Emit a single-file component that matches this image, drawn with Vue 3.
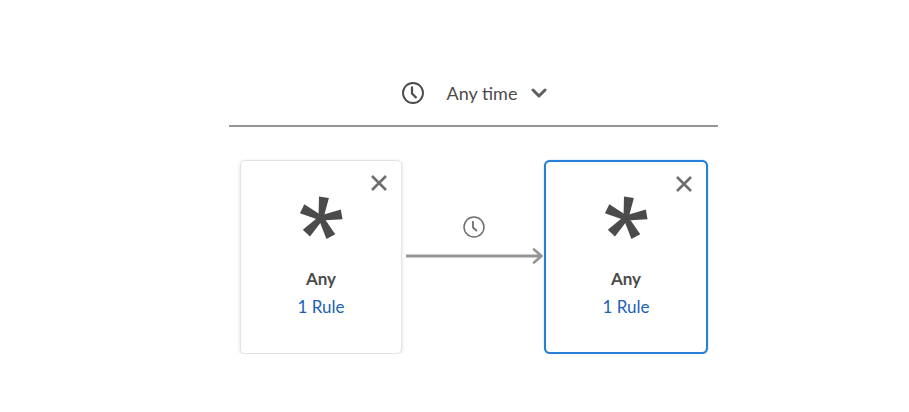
<script setup>
const cards = [
  { id: 1, selected: false },
  { id: 2, selected: true },
];
</script>

<template>
  <div class="page">
    <div class="time-select">
      <svg class="clock" width="24" height="24" viewBox="0 0 24 24">
        <circle cx="12" cy="12" r="10" fill="none" stroke="#4b4b4b" stroke-width="1.9" />
        <path d="M11 5.5 V12.5 L15.5 17" fill="none" stroke="#4b4b4b" stroke-width="2.2" />
      </svg>
      <span class="time-label">Any time</span>
      <svg class="chevron" width="16" height="10" viewBox="0 0 16 10">
        <path d="M2 2 L8 8 L14 2" fill="none" stroke="#5e5e5e" stroke-width="3" stroke-linecap="round" stroke-linejoin="round" />
      </svg>
    </div>

    <div class="flow">
      <template v-for="(card, i) in cards" :key="card.id">
        <div v-if="i > 0" class="connector">
          <svg class="small-clock" width="24" height="24" viewBox="0 0 24 24">
            <circle cx="12" cy="12" r="10" fill="none" stroke="#6e6e6e" stroke-width="1.5" />
            <path d="M11 6 V12.5 L15 16" fill="none" stroke="#6e6e6e" stroke-width="1.8" />
          </svg>
          <svg class="arrow" width="138" height="16" viewBox="0 0 138 16">
            <path d="M0 8 H135" stroke="#959595" stroke-width="3" />
            <path d="M128 1.5 L135.5 8 L128 14.5" fill="none" stroke="#959595" stroke-width="2.6" stroke-linecap="round" stroke-linejoin="round" />
          </svg>
        </div>
        <div class="card" :class="{ selected: card.selected }">
          <svg class="close" width="18" height="18" viewBox="0 0 18 18">
            <path d="M2 2 L16 16 M16 2 L2 16" stroke="#6e6e6e" stroke-width="2.6" />
          </svg>
          <svg class="star" width="50" height="50" viewBox="0 0 50 50">
            <g v-for="a in [8, 80, 152, 224, 296]" :key="a" :transform="`rotate(${a} 25 25)`">
              <path d="M22.5 25 L20 4 H30 L27.5 25 Z" fill="#4b4b4b" />
            </g>
          </svg>
          <div class="name">Any</div>
          <div class="rule">1 Rule</div>
        </div>
      </template>
    </div>
  </div>
</template>

<style scoped>
.page {
  width: 489px;
  margin-left: 229px;
  font-family: Lato, "Noto Sans", sans-serif;
  color: #4b4b4b;
}

.time-select {
  display: flex;
  align-items: center;
  justify-content: center;
  height: 127px;
  padding-top: 60px;
  padding-left: 1px;
  box-sizing: border-box;
  border-bottom: 2px solid #959595;
}

.clock {
  margin-right: 22px;
}

.time-label {
  font-size: 18px;
  margin-right: 14px;
}

.flow {
  display: flex;
  padding: 33px 10px 0 11px;
}

.card {
  position: relative;
  box-sizing: border-box;
  width: 162px;
  height: 194px;
  padding-top: 32px;
  background: #fff;
  border: 1px solid #e3e3e3;
  border-radius: 5px;
  box-shadow: 0 1px 4px rgba(0, 0, 0, 0.12);
  text-align: center;
}

.card.selected {
  width: 164px;
  padding-top: 31px;
  border: 2px solid #2680d6;
  border-radius: 6px;
  box-shadow: 0 0 1px #2680d6;
}

.close {
  position: absolute;
  top: 13px;
  right: 13px;
}

.star {
  display: block;
  margin: 0 auto;
}

.name {
  margin-top: 24px;
  font-size: 17px;
  font-weight: 700;
  line-height: 24px;
}

.rule {
  margin-top: 4px;
  font-size: 17px;
  line-height: 24px;
  color: #1a62b5;
}

.connector {
  width: 142px;
  display: flex;
  flex-direction: column;
  align-items: center;
  padding-top: 55px;
}

.arrow {
  margin-top: 9px;
  margin-left: 4px;
}

.small-clock {
  margin-left: 1px;
}
</style>
